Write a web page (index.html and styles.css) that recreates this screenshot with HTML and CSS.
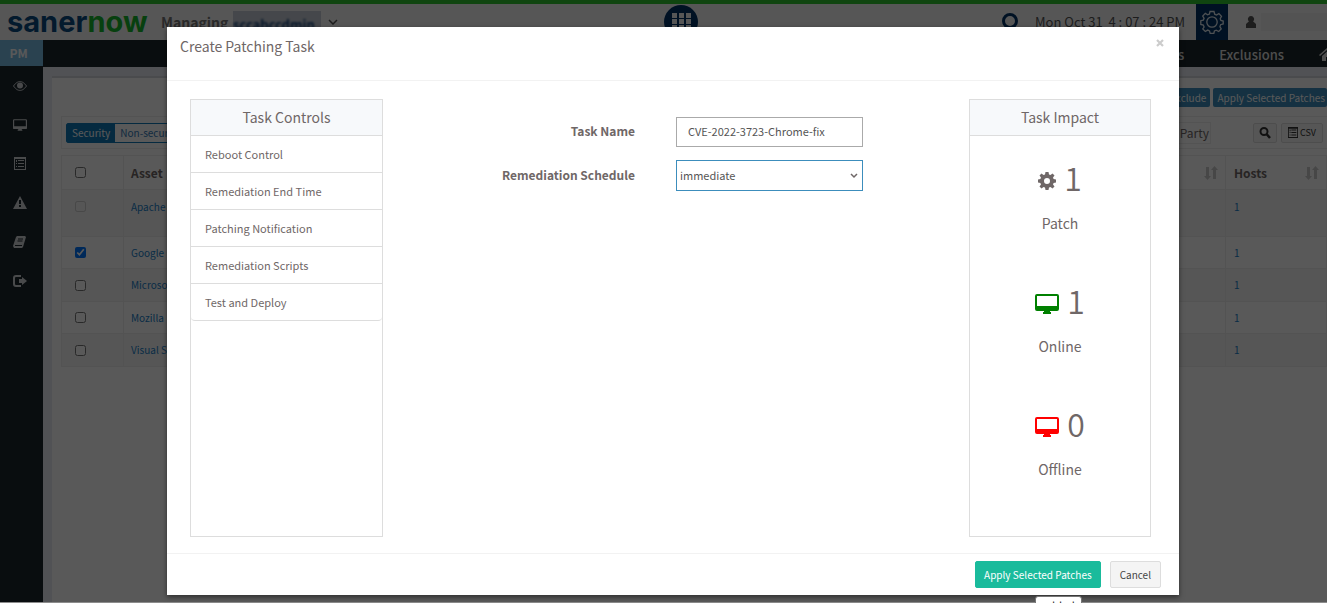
FILE: index.html
```
<!DOCTYPE html>
<html lang="en">
<head>
  <meta charset="UTF-8">
  <meta name="viewport" content="width=device-width, initial-scale=1.0">
  <title>Create Patching Task</title>
  <link rel="stylesheet" href="styles.css">
</head>
<body>
  <svg class="sprite" aria-hidden="true">
    <symbol id="desktop" viewBox="0 0 24 20">
      <path d="M2 0h20a2 2 0 0 1 2 2v13a2 2 0 0 1-2 2h-7v1h1v2H8v-2h1v-1H2a2 2 0 0 1-2-2V2a2 2 0 0 1 2-2zm0 2v10h20V2z" fill="currentColor" fill-rule="evenodd"/>
    </symbol>
    <symbol id="list" viewBox="0 0 12 13">
      <path d="M0 0h12v13H0zM1 2v10h10V2zM2 3h1v2H2zm2 0h6v1H4zM2 6h1v1H2zm2 0h6v1H4zM2 9h1v1H2zm2 0h6v1H4z" fill="currentColor" fill-rule="evenodd"/>
    </symbol>
    <symbol id="sort" viewBox="0 0 14 14">
      <path d="M2 1h3v9h2l-3.500 4L0 10h2zM9 13h3V4h2l-3.500-4L7 4h2z" fill="currentColor"/>
    </symbol>
  </svg>

  <div class="app">
    <header class="topbar">
      <div class="logo">saner<span>now</span></div>
      <div class="managing">Managing</div>
      <div class="account"><span>sccabccdmin</span></div>
      <svg class="chevron" width="10" height="6" viewBox="0 0 10 6"><path d="M1 1l4 4 4-4" fill="none" stroke="currentColor" stroke-width="1.5"/></svg>
      <button class="apps" type="button" aria-label="Apps">
        <svg width="19" height="19" viewBox="0 0 19 19"><path d="M0 0h5v5H0zM7 0h5v5H7zM14 0h5v5h-5zM0 6h5v5H0zM7 6h5v5H7zM14 6h5v5h-5zM0 12h5v5H0zM7 12h5v5H7zM14 12h5v5h-5z" fill="currentColor"/></svg>
      </button>
      <svg class="search" width="18" height="20" viewBox="0 0 18 20"><circle cx="9" cy="9" r="6.5" fill="none" stroke="currentColor" stroke-width="3"/></svg>
      <div class="clock">Mon Oct 31&nbsp; 4 : 07 : 24 PM</div>
      <button class="settings" type="button" aria-label="Settings">
        <svg width="24" height="24" viewBox="0 0 24 24" fill="none" stroke="currentColor" stroke-width="1.3"><circle cx="12" cy="12" r="5.2"/><path d="M10 1.5h4l.7 2.7 1.8.8 2.4-1.4 2.6 2.7-1.3 2.4.7 1.8 2.3.5v3l-2.6.7-.7 1.9 1.3 2.3-2.5 2.6-2.5-1.3-1.8.8-.6 2.5h-3.6l-.7-2.6-1.8-.8-2.4 1.4-2.5-2.6L4.100 17l-.8-2-2.500-.6v-3.700l2.500-.6.8-1.800L2.700 6l2.600-2.600 2.400 1.400L9.400 4z"/></svg>
      </button>
      <svg class="user" width="10" height="12" viewBox="0 0 10 12"><path d="M5 0a3 3 0 0 1 2 5.300L10 8v4H0V8l3-2.700A3 3 0 0 1 5 0z" fill="currentColor"/></svg>
      <div class="username"></div>
    </header>

    <div class="frame">
      <nav class="sidebar">
        <div class="product">PM</div>
        <a href="#" aria-label="View"><svg width="14" height="10" viewBox="0 0 14 10"><path d="M.5 5C3 1.500 5 .6 7 .6S11 1.500 13.500 5C11 8.500 9 9.400 7 9.400S3 8.500.5 5z" fill="none" stroke="currentColor"/><circle cx="7" cy="4.500" r="3" fill="currentColor"/></svg></a>
        <a href="#" aria-label="Devices"><svg width="14" height="12"><use href="#desktop"/></svg></a>
        <a href="#" aria-label="Reports"><svg width="12" height="13"><use href="#list"/></svg></a>
        <a href="#" aria-label="Alerts"><svg width="14" height="13" viewBox="0 0 14 13"><path d="M7 0l7 13H0zM6 4v4h2V4zm0 5v2h2V9z" fill="currentColor" fill-rule="evenodd"/></svg></a>
        <a href="#" aria-label="Docs"><svg width="13" height="12" viewBox="0 0 13 12"><path d="M4 0h8l1 1-3 10-1 1H1l-1-2L3 1z" fill="currentColor"/><path d="M5 3h5M4.500 5h5M2 9.500h7" stroke="#1c272d"/></svg></a>
        <a href="#" aria-label="Log out"><svg width="14" height="12" viewBox="0 0 14 12"><path d="M8 1H3a2 2 0 0 0-2 2v6a2 2 0 0 0 2 2h5" fill="none" stroke="currentColor" stroke-width="2"/><path d="M6 4h3V2l5 4-5 4V8H6z" fill="currentColor"/></svg></a>
      </nav>

      <div class="page">
        <nav class="menu">
          <a href="#">Patches</a>
          <a href="#">Exclusions</a>
          <svg width="16" height="13" viewBox="0 0 16 13"><path d="M0 7l8-7 8 7-1 1-7-6-7 6zM3 8l5-4.500L13 8v5H9V9H7v4H3z" fill="currentColor"/></svg>
        </nav>
        <main class="content">
          <div class="actions">
            <button type="button">Exclude</button>
            <button type="button">Apply Selected Patches</button>
          </div>
          <div class="filters">
            <div class="tabs"><button class="active" type="button">Security</button><button type="button">Non-security</button></div>
            <div class="party">Third Party</div>
            <button class="tool" type="button" aria-label="Search"><svg width="12" height="12" viewBox="0 0 12 12"><circle cx="5" cy="4.500" r="3.500" fill="none" stroke="currentColor" stroke-width="2"/><path d="M7.500 7l3.500 4" stroke="currentColor" stroke-width="2.500"/></svg></button>
            <button class="tool csv" type="button"><svg width="10" height="11"><use href="#list"/></svg>CSV</button>
          </div>
          <table class="assets">
            <thead>
              <tr>
                <th class="check"><input type="checkbox" aria-label="Select all"></th>
                <th>Asset</th>
                <th class="sortable"><svg width="14" height="14"><use href="#sort"/></svg></th>
                <th class="hosts"><span>Hosts <svg width="14" height="14"><use href="#sort"/></svg></span></th>
              </tr>
            </thead>
            <tbody>
              <tr class="tall"><td class="check"><input type="checkbox" aria-label="Apache" disabled></td><td><a href="#">Apache</a></td><td></td><td><a href="#">1</a></td></tr>
              <tr><td class="check"><input type="checkbox" aria-label="Google" checked></td><td><a href="#">Google</a></td><td></td><td><a href="#">1</a></td></tr>
              <tr><td class="check"><input type="checkbox" aria-label="Microsoft"></td><td><a href="#">Microsoft</a></td><td></td><td><a href="#">1</a></td></tr>
              <tr><td class="check"><input type="checkbox" aria-label="Mozilla"></td><td><a href="#">Mozilla</a></td><td></td><td><a href="#">1</a></td></tr>
              <tr><td class="check"><input type="checkbox" aria-label="Visual Studio"></td><td><a href="#">Visual Studio</a></td><td></td><td><a href="#">1</a></td></tr>
            </tbody>
          </table>
        </main>
      </div>
    </div>
  </div>

  <div class="overlay">
    <div class="modal" role="dialog" aria-labelledby="modalTitle">
      <div class="modal-header">
        <h1 id="modalTitle">Create Patching Task</h1>
        <button class="close" type="button" aria-label="Close">
          <svg width="8" height="8" viewBox="0 0 8 8"><path d="M1 1l6 6M7 1L1 7" stroke="currentColor" stroke-width="2.200"/></svg>
        </button>
      </div>
      <div class="modal-body">
        <section class="panel">
          <h2>Task Controls</h2>
          <ul class="controls">
            <li><a href="#">Reboot Control</a></li>
            <li><a href="#">Remediation End Time</a></li>
            <li><a href="#">Patching Notification</a></li>
            <li><a href="#">Remediation Scripts</a></li>
            <li><a href="#">Test and Deploy</a></li>
          </ul>
        </section>
        <form class="task-form">
          <label for="taskName">Task Name</label>
          <input type="text" id="taskName" value="CVE-2022-3723-Chrome-fix">
          <label for="schedule">Remediation Schedule</label>
          <div class="select">
            <select id="schedule">
              <option>immediate</option>
            </select>
            <svg width="8" height="6" viewBox="0 0 8 6"><path d="M1 1l3 3 3-3" fill="none" stroke="currentColor" stroke-width="1.500"/></svg>
          </div>
        </form>
        <section class="panel">
          <h2>Task Impact</h2>
          <div class="impact">
            <div class="count"><svg width="18" height="18" viewBox="0 0 18 18"><path d="M7.500 0h3l.5 2.500 1.500.6 2-1.500 2 2-1.500 2 .6 1.500L18 7.500v3l-2.400.5-.6 1.500 1.500 2-2 2-2-1.500-1.500.6-.5 2.400h-3L7 15.600 5.500 15l-2 1.500-2-2 1.500-2-.6-1.500L0 10.500v-3L2.400 7 3 5.500l-1.500-2 2-2 2 1.500L7 2.500zM9 6a3 3 0 1 0 0 6 3 3 0 0 0 0-6z" fill="currentColor" fill-rule="evenodd"/></svg>1</div>
            <div class="caption">Patch</div>
          </div>
          <div class="impact">
            <div class="count"><svg class="online" width="24" height="20"><use href="#desktop"/></svg>1</div>
            <div class="caption">Online</div>
          </div>
          <div class="impact">
            <div class="count"><svg class="offline" width="24" height="20"><use href="#desktop"/></svg>0</div>
            <div class="caption">Offline</div>
          </div>
        </section>
      </div>
      <div class="modal-footer">
        <button class="btn primary" type="button">Apply Selected Patches</button>
        <button class="btn" type="button">Cancel</button>
      </div>
    </div>
    <div class="tooltip">added</div>
  </div>
</body>
</html>
```

FILE: styles.css
```
* {
  box-sizing: border-box;
}
body {
  margin: 0;
  height: 100vh;
  overflow: hidden;
  font-family: "Noto Sans CJK JP", "Noto Sans", sans-serif;
  font-size: 11px;
  line-height: 16px;
  color: #6f6767;
  background: #fff;
}
button, input, select {
  font-family: inherit;
  margin: 0;
}
a {
  color: inherit;
  text-decoration: none;
}
svg {
  flex: none;
}
.sprite {
  position: absolute;
  width: 0;
  height: 0;
}

/* page behind the dialog */
.app {
  display: flex;
  flex-direction: column;
  height: 100vh;
}
.topbar {
  display: flex;
  flex: none;
  align-items: center;
  height: 40px;
  border-top: 4px solid #2fc52f;
  background: #f7f7f7;
  white-space: nowrap;
}
.logo {
  padding-left: 7px;
  width: 161px;
  font: bold 29px/36px Inter, sans-serif;
  color: #0b4a80;
}
.logo span {
  color: #16b82c;
}
.managing {
  width: 72px;
  font-size: 14px;
  font-weight: bold;
  color: #777;
}
.account {
  width: 88px;
  height: 22px;
  padding-top: 6px;
  font-size: 13px;
  font-weight: bold;
  color: #14437c;
  background: #c6ccd6;
}
.account span {
  filter: blur(1px);
}
.chevron {
  margin: 0 0 0 7px;
  color: #555;
}
.apps {
  display: flex;
  align-items: center;
  justify-content: center;
  width: 34px;
  height: 34px;
  padding: 0;
  margin-left: 326px;
  border: 0;
  border-radius: 50%;
  color: #f7f7f7;
  background: #003366;
}
.search {
  margin-left: auto;
  margin-right: 16px;
  color: #003366;
}
.clock {
  width: 161px;
  font-size: 13px;
  color: #555;
}
.settings {
  display: flex;
  align-items: center;
  justify-content: center;
  width: 32px;
  height: 36px;
  padding: 0;
  border: 0;
  color: #e0e8ee;
  background: #003366;
}
.user {
  margin: 0 5px 0 18px;
  color: #555;
}
.username {
  width: 66px;
  height: 18px;
  background: #eee;
}
.frame {
  display: flex;
  flex: 1;
  min-height: 0;
}
.sidebar {
  display: flex;
  flex-direction: column;
  width: 43px;
  background: #1c272d;
  color: #d0d4d8;
}
.product {
  height: 26px;
  padding-right: 6px;
  font-size: 12px;
  font-weight: bold;
  line-height: 26px;
  text-align: center;
  color: #fff;
  background: #79bde6;
}
.sidebar a {
  display: flex;
  align-items: center;
  justify-content: center;
  height: 39px;
  padding-right: 4px;
}
.page {
  display: flex;
  flex: 1;
  flex-direction: column;
  min-width: 0;
  background: #e7eaf2;
}
.menu {
  display: flex;
  align-items: center;
  justify-content: flex-end;
  gap: 35px;
  height: 27px;
  padding-top: 2px;
  margin-right: -8px;
  font-size: 13px;
  font-weight: 500;
  color: #dcdcdc;
  background: #1c272d;
}
.content {
  flex: 1;
  margin: 9px 0 0 9px;
  padding: 10px 0 0 9px;
  border-top: 2px solid #d3d7dc;
  overflow: hidden;
  background: #fff;
}
.actions {
  display: flex;
  justify-content: flex-end;
  gap: 3px;
}
.actions button {
  height: 19px;
  padding: 0 4px;
  border: 0;
  border-radius: 2px;
  font-size: 10px;
  line-height: 19px;
  color: #fff;
  background: #3c8dbc;
}
.actions button:last-child {
  padding-right: 2px;
}
.filters {
  display: flex;
  align-items: center;
  height: 33px;
  margin-top: 9px;
  padding: 0 4px;
  border: 1px solid #eee;
  border-right: 0;
}
.tabs {
  display: flex;
  height: 20px;
  border: 1px solid #0f79b8;
  border-radius: 2px;
}
.tabs button {
  padding: 0 5px;
  border: 0;
  font-size: 10px;
  line-height: 17px;
  color: #337ab7;
  background: #fff;
}
.tabs .active {
  color: #fff;
  background: #0f79b8;
}
.party {
  margin-left: auto;
  margin-right: 42px;
  padding: 1px;
  font-size: 12px;
  line-height: 18px;
  border: 1px solid #eee;
}
.tool {
  display: flex;
  align-items: center;
  justify-content: center;
  gap: 2px;
  width: 24px;
  height: 20px;
  padding: 0;
  border: 1px solid #ddd;
  border-radius: 2px;
  font-size: 9px;
  color: #333;
  background: #f7f7f7;
}
.csv {
  width: 42px;
  margin-left: 4px;
}
.assets {
  width: 100%;
  margin-top: 6px;
  border-collapse: collapse;
  table-layout: fixed;
}
.assets th, .assets td {
  height: 32px;
  padding: 0 7px;
  border: 1px solid #eee;
  text-align: left;
}
.assets th {
  height: 34px;
  font-size: 12px;
}
.assets td {
  font-size: 10px;
  color: #2080c8;
}
.assets tbody tr:nth-child(odd) {
  background: #f6f6f6;
}
.assets tr:nth-child(odd) td {
  height: 33px;
}
.assets .tall:first-child td {
  height: 47px;
  padding-bottom: 13px;
}
.assets .check {
  width: 62px;
  padding-left: 13px;
}
.assets input {
  display: block;
  width: 11px;
  height: 11px;
}
.assets .sortable {
  width: 60px;
}
.sortable svg {
  display: block;
  margin: 0 0 0 auto;
  color: #ccc;
}
.assets .hosts {
  width: 101px;
}
.assets tr > :last-child {
  padding-left: 8px;
}
.hosts span {
  display: flex;
  align-items: center;
  justify-content: space-between;
}
.hosts svg {
  color: #ccc;
}

/* dialog */
.overlay {
  position: absolute;
  inset: 0;
  padding: 27px 148px 0 167px;
  border-bottom: 1px solid #8c8c8c;
  background: rgba(0, 0, 0, 0.65);
}
.modal {
  background: #fff;
  box-shadow: 0 2px 5px rgba(0, 0, 0, 0.5);
}
.modal-header {
  display: flex;
  justify-content: space-between;
  align-items: flex-start;
  height: 54px;
  padding: 8px 15px 8px 13px;
  border-bottom: 1px solid #f2f2f2;
}
.modal-header h1 {
  margin: 0;
  font-size: 14px;
  font-weight: normal;
  line-height: 22px;
}
.close {
  display: flex;
  align-items: center;
  height: 16px;
  padding: 0;
  border: 0;
  color: #ccc;
  background: none;
}
.modal-body {
  display: grid;
  grid-template-columns: 193px 1fr 182px;
  padding: 18px 28px 16px 23px;
}
.panel {
  min-height: 438px;
  border: 1px solid #ddd;
}
.panel h2 {
  margin: 0;
  font-size: 14px;
  font-weight: normal;
  line-height: 34px;
  height: 36px;
  text-align: center;
  border-bottom: 1px solid #ddd;
  background: #f7f9fb;
}
.controls {
  margin: 0;
  padding: 0;
  list-style: none;
}
.controls a {
  display: block;
  padding: 0 14px;
  line-height: 36px;
  border-bottom: 1px solid #ddd;
}
.controls li:last-child a {
  border-radius: 0 0 4px 4px;
}
.task-form {
  display: grid;
  grid-template-columns: 43% 32%;
  align-content: start;
  align-items: center;
  gap: 13px 41px;
  padding-top: 18px;
}
.task-form label {
  padding-bottom: 2px;
  font-size: 12px;
  font-weight: bold;
  text-align: right;
}
.task-form input, .task-form select {
  width: 100%;
  height: 30px;
  padding: 0 11px 2px;
  border: 1px solid #aaa;
  font-size: 11px;
  color: #555;
  background: #fff;
}
.task-form select {
  display: block;
  height: 31px;
  padding: 0 3px 2px;
  border-color: #3c8dbc;
  border-radius: 0;
  appearance: none;
}
.select {
  display: grid;
  align-items: center;
}
.select select, .select svg {
  grid-area: 1 / 1;
}
.select svg {
  justify-self: end;
  margin-right: 5px;
  pointer-events: none;
}
.impact {
  height: 123px;
  padding-top: 21px;
  text-align: center;
}
.count {
  display: flex;
  align-items: center;
  justify-content: center;
  gap: 8px;
  margin-bottom: 4px;
  font-size: 32px;
  font-weight: 350;
  line-height: 40px;
}
.count svg {
  margin-top: 7px;
}
.online {
  color: #008000;
}
.offline {
  color: #f00;
}
.caption {
  font-size: 14px;
  line-height: 44px;
}
.modal-footer {
  display: flex;
  justify-content: flex-end;
  gap: 9px;
  padding: 7px 18px;
  border-top: 1px solid #f2f2f2;
}
.btn {
  height: 27px;
  padding: 0 9px;
  border: 1px solid #ddd;
  border-radius: 2px;
  font-size: 10px;
  color: #444;
  background: #f4f4f4;
}
.primary {
  padding: 0 8px;
  border-color: #1abb9c;
  color: #fff;
  background: #1abb9c;
}
.tooltip {
  position: absolute;
  left: 1035px;
  top: 596px;
  width: 47px;
  border: 1px solid #767676;
  border-radius: 3px;
  text-align: center;
  color: #222;
  background: #fff;
}
```
